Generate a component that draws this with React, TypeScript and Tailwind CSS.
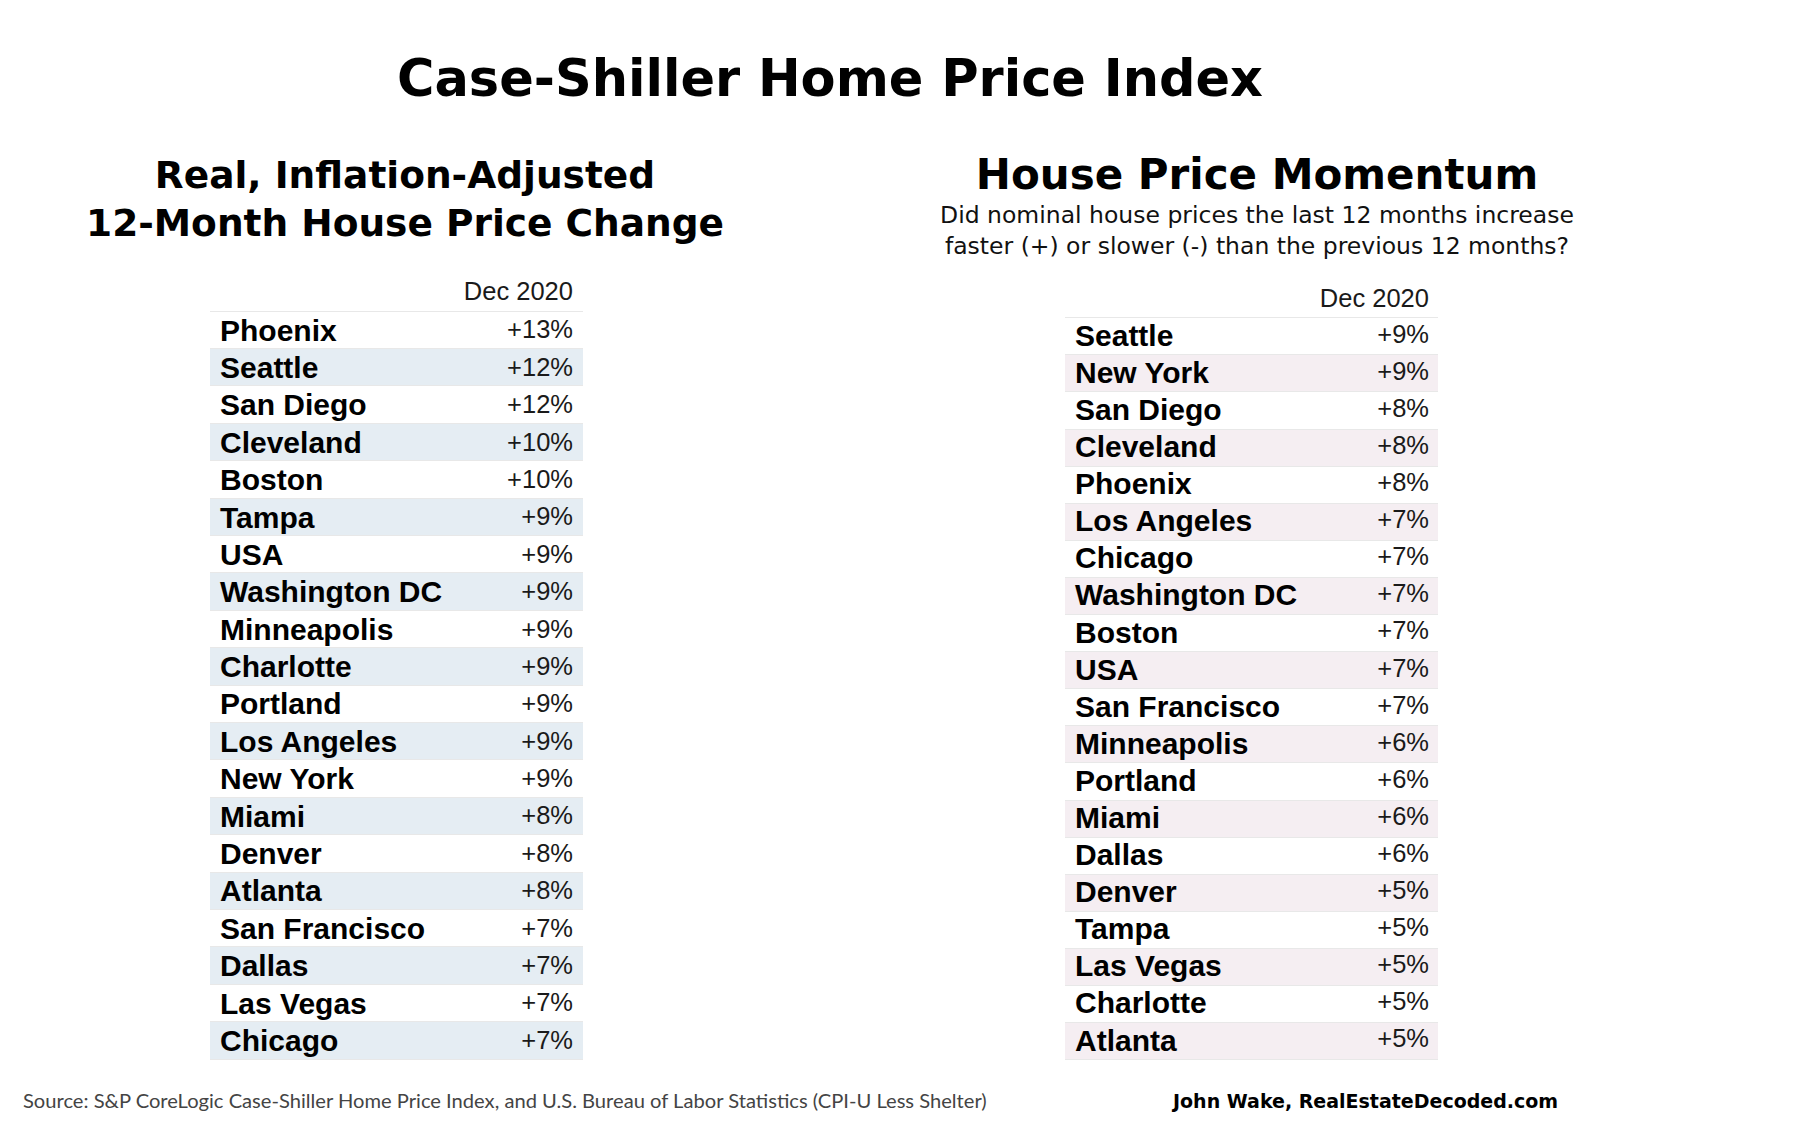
const realChange = [
  ['Phoenix', '+13%'],
  ['Seattle', '+12%'],
  ['San Diego', '+12%'],
  ['Cleveland', '+10%'],
  ['Boston', '+10%'],
  ['Tampa', '+9%'],
  ['USA', '+9%'],
  ['Washington DC', '+9%'],
  ['Minneapolis', '+9%'],
  ['Charlotte', '+9%'],
  ['Portland', '+9%'],
  ['Los Angeles', '+9%'],
  ['New York', '+9%'],
  ['Miami', '+8%'],
  ['Denver', '+8%'],
  ['Atlanta', '+8%'],
  ['San Francisco', '+7%'],
  ['Dallas', '+7%'],
  ['Las Vegas', '+7%'],
  ['Chicago', '+7%'],
]

const momentum = [
  ['Seattle', '+9%'],
  ['New York', '+9%'],
  ['San Diego', '+8%'],
  ['Cleveland', '+8%'],
  ['Phoenix', '+8%'],
  ['Los Angeles', '+7%'],
  ['Chicago', '+7%'],
  ['Washington DC', '+7%'],
  ['Boston', '+7%'],
  ['USA', '+7%'],
  ['San Francisco', '+7%'],
  ['Minneapolis', '+6%'],
  ['Portland', '+6%'],
  ['Miami', '+6%'],
  ['Dallas', '+6%'],
  ['Denver', '+5%'],
  ['Tampa', '+5%'],
  ['Las Vegas', '+5%'],
  ['Charlotte', '+5%'],
  ['Atlanta', '+5%'],
]

const titleFont = "font-['DejaVu_Sans',Verdana,sans-serif]"
const tableFont = "font-['Liberation_Sans',Arial,sans-serif]"

export default function App() {
  return (
    <div className="w-[1800px] h-[1136px] bg-white text-black flex flex-col overflow-hidden">
      <div className="pt-[49px] flex">
        <h1
          className={`${titleFont} ml-[330px] w-[1000px] text-center text-[51px] leading-[60px] font-bold`}
        >
          Case-Shiller Home Price Index
        </h1>
      </div>

      <div className="flex h-[953px]">
        {/* left: real change */}
        <div className="w-[810px] flex flex-col">
          <h2
            className={`${titleFont} mt-[42px] text-center text-[37.5px] leading-[48px] font-bold`}
          >
            Real, Inflation-Adjusted
            <br />
            12-Month House Price Change
          </h2>
          <div className={`${tableFont} ml-[210px] w-[373px] mt-[29.2px]`}>
            <div className="h-[34.5px] pr-[10px] text-right text-[25.5px] leading-[30px] text-[#1a1a1a]">
              Dec 2020
            </div>
            <div className="border-b border-[#e8e8e8]">
              {realChange.map(([city, pct], i) => (
                <div
                  key={city}
                  className={`h-[37.4px] flex justify-between items-start border-t border-[#e8e8e8] pl-[10px] pr-[10px] ${
                    i % 2 === 1 ? 'bg-[#e5edf3]' : 'bg-white'
                  }`}
                >
                  <span className="pt-[3.9px] text-[30px] leading-[30px] font-bold">{city}</span>
                  <span className="pt-[5.7px] text-[25.5px] leading-[25.5px] text-[#1a1a1a]">{pct}</span>
                </div>
              ))}
            </div>
          </div>
        </div>

        {/* right: momentum */}
        <div className="w-[894px] flex flex-col">
          <h2
            className={`${titleFont} mt-[40.5px] text-center text-[42px] leading-[50px] font-bold`}
          >
            House Price Momentum
          </h2>
          <p className={`${titleFont} mt-[0.4px] text-center text-[23.5px] leading-[31px] text-[#111]`}>
            Did nominal house prices the last 12 months increase
            <br />
            faster (+) or slower (-) than the previous 12 months?
          </p>
          <div className={`${tableFont} ml-[255px] w-[373px] mt-[21.6px]`}>
            <div className="h-[33.8px] pr-[9px] text-right text-[25.5px] leading-[30px] text-[#1a1a1a]">
              Dec 2020
            </div>
            <div className="border-b border-[#e8e8e8]">
              {momentum.map(([city, pct], i) => (
                <div
                  key={city}
                  className={`h-[37.1px] flex justify-between items-start border-t border-[#e8e8e8] pl-[10px] pr-[9px] ${
                    i % 2 === 1 ? 'bg-[#f5eef2]' : 'bg-white'
                  }`}
                >
                  <span className="pt-[2.5px] text-[30px] leading-[30px] font-bold">{city}</span>
                  <span className="pt-[3.4px] text-[25.5px] leading-[25.5px] text-[#1a1a1a]">{pct}</span>
                </div>
              ))}
            </div>
          </div>
        </div>
      </div>

      <div className="flex items-baseline pt-[26px]">
        <div className="w-[1173px] pl-[23px] font-['Lato',sans-serif] text-[20.15px] leading-[24px] text-[#444]">
          Source: S&amp;P CoreLogic Case-Shiller Home Price Index, and U.S. Bureau of Labor Statistics (CPI-U Less Shelter)
        </div>
        <div className={`${titleFont} text-[19px] leading-[24px] font-bold`}>
          John Wake, RealEstateDecoded.com
        </div>
      </div>
    </div>
  )
}
